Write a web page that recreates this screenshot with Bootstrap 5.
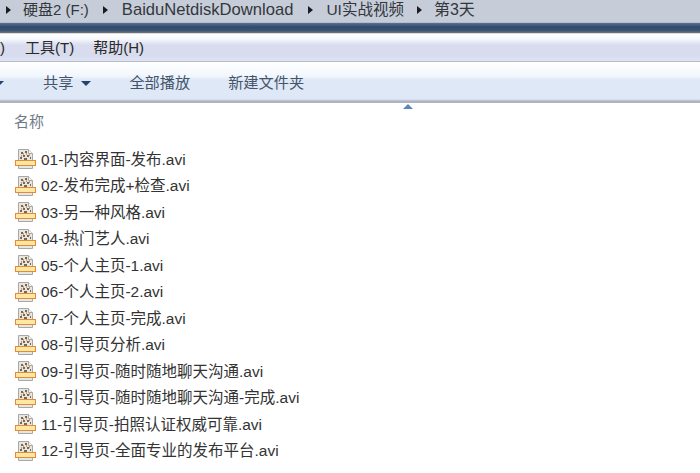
<!DOCTYPE html>
<html lang="zh">
<head>
    <meta charset="UTF-8">
    <title>第3天</title>
    <link href="https://cdn.jsdelivr.net/npm/bootstrap@5.3.3/dist/css/bootstrap.min.css" rel="stylesheet">
    <script src="https://cdn.jsdelivr.net/npm/bootstrap@5.3.3/dist/js/bootstrap.bundle.min.js"></script>
    <style>
        html, body {
            height: 473px;
            overflow: hidden;
        }

        body {
            background-color: #fff;
            font-family: "Liberation Sans", "Noto Sans CJK SC", sans-serif;
            color: #333;
        }

        .addr-bar {
            height: 22px;
            padding-left: 6px;
            padding-bottom: 2px;
            background-color: #c6cdd8;
            font-size: 16px;
            line-height: 18px;
            color: #33373d;
            white-space: nowrap;
        }

        .addr-disk {
            font-size: 15px;
            margin-left: 12px;
            margin-right: 14px;
        }

        .addr-long {
            font-size: 16.6px;
            margin-left: 14px;
            margin-right: 15px;
        }

        .addr-video {
            font-size: 15.5px;
            margin-left: 13px;
            margin-right: 13px;
        }

        .addr-day {
            margin-left: 12px;
        }

        .addr-arrow {
            width: 0;
            height: 0;
            border-left: 5px solid #1c1c1c;
            border-top: 4px solid transparent;
            border-bottom: 4px solid transparent;
        }

        .dark-strip {
            height: 12px;
            background: linear-gradient(#b4bdca 0, #b4bdca 1px, #5b7390 1px, #2f4a6b 5px, #3a5676 9px, #6b6f74 10px, #6b6f74 11px, #d8dde4 11px);
        }

        .menu-bar {
            height: 28px;
            background: linear-gradient(#fff 0, #f6f8fc 5px, #d8dced 11px, #d8dcef 22px, #dfe4f1 27px, #b5bccb 27px);
            font-size: 15px;
            color: #2a2a2a;
        }

        .menu-cut {
            width: 25px;
            flex-shrink: 0;
        }

        .menu-help {
            margin-left: 19px;
        }

        .tool-bar {
            height: 41px;
            padding-top: 2px;
            background: linear-gradient(#fff 0, #f2f7fd 14px, #dfe8f6 18px, #dfe8f6 37px, #cfd6e2 38px, #aeb4c0 39px, #aeb4c0 41px);
            font-size: 15.2px;
            color: #44546a;
        }

        .tool-caret {
            width: 0;
            height: 0;
            border-top: 5px solid #24426b;
            border-left: 5px solid transparent;
            border-right: 5px solid transparent;
        }

        .tool-cut {
            margin-left: -6px;
        }

        .tool-share {
            margin-left: 39px;
        }

        .tool-play {
            margin-left: 38px;
        }

        .tool-new {
            margin-left: 38px;
        }

        .head-row {
            height: 43px;
            padding-left: 14px;
            padding-bottom: 5px;
            font-size: 15px;
            color: #6f7a86;
        }

        .sort-mark {
            position: absolute;
            left: 403px;
            top: 1px;
            width: 0;
            height: 0;
            border-bottom: 5px solid #5d88b5;
            border-left: 5px solid transparent;
            border-right: 5px solid transparent;
        }

        .file-row {
            height: 26.5px;
            padding-left: 15px;
            gap: 5px;
            font-size: 15.5px;
            color: #333;
            white-space: nowrap;
        }
    </style>
</head>

<body>

    <div class="addr-bar d-flex align-items-center">
        <span class="addr-arrow"></span>
        <span class="addr-disk">硬盘2 (F:)</span>
        <span class="addr-arrow"></span>
        <span class="addr-long">BaiduNetdiskDownload</span>
        <span class="addr-arrow"></span>
        <span class="addr-video">UI实战视频</span>
        <span class="addr-arrow"></span>
        <span class="addr-day">第3天</span>
    </div>
    <div class="dark-strip"></div>

    <div class="menu-bar d-flex align-items-center">
        <span class="menu-cut">)</span>
        <span>工具(T)</span>
        <span class="menu-help">帮助(H)</span>
    </div>

    <div class="tool-bar d-flex align-items-center">
        <span class="tool-caret tool-cut"></span>
        <span class="d-flex align-items-center gap-2 tool-share">共享 <span class="tool-caret"></span></span>
        <span class="tool-play">全部播放</span>
        <span class="tool-new">新建文件夹</span>
    </div>

    <div class="head-row position-relative d-flex align-items-center">
        <span>名称</span>
        <span class="sort-mark"></span>
    </div>

    <div id="files"></div>

    <script>
        const names = [
            "01-内容界面-发布.avi", "02-发布完成+检查.avi", "03-另一种风格.avi", "04-热门艺人.avi",
            "05-个人主页-1.avi", "06-个人主页-2.avi", "07-个人主页-完成.avi", "08-引导页分析.avi",
            "09-引导页-随时随地聊天沟通.avi", "10-引导页-随时随地聊天沟通-完成.avi",
            "11-引导页-拍照认证权威可靠.avi", "12-引导页-全面专业的发布平台.avi"
        ];
        const icon = `<svg width="21" height="22" viewBox="0 0 21 22">
            <path d="M3.5 1.5h10l4 4v15h-14z" fill="#e6e6e3" stroke="#a8a8a6"/>
            <path d="M13.5 1.5v4h4" fill="#f6f6f5" stroke="#a8a8a6"/>
            <path d="M6 4h2v2H6zM10 3h2v2h-2zM8 7h2v2H8zM12 7h2v2h-2zM5 9h2v2H5zM15 9h1v2h-1zM9 10h3v2H9z" fill="#7a6553"/>
            <path d="M8 5h1v2H8zM11 5h1v2h-1zM14 6h1v2h-1zM6 7h1v2H6z" fill="#cf9a68"/>
            <rect x="0.5" y="12.5" width="20" height="5" fill="#ffe7a0" stroke="#e48a3a"/>
        </svg>`;
        document.getElementById("files").innerHTML = names.map(n =>
            `<div class="file-row d-flex align-items-center">${icon}<span>${n}</span></div>`
        ).join("");
    </script>

</body>

</html>
